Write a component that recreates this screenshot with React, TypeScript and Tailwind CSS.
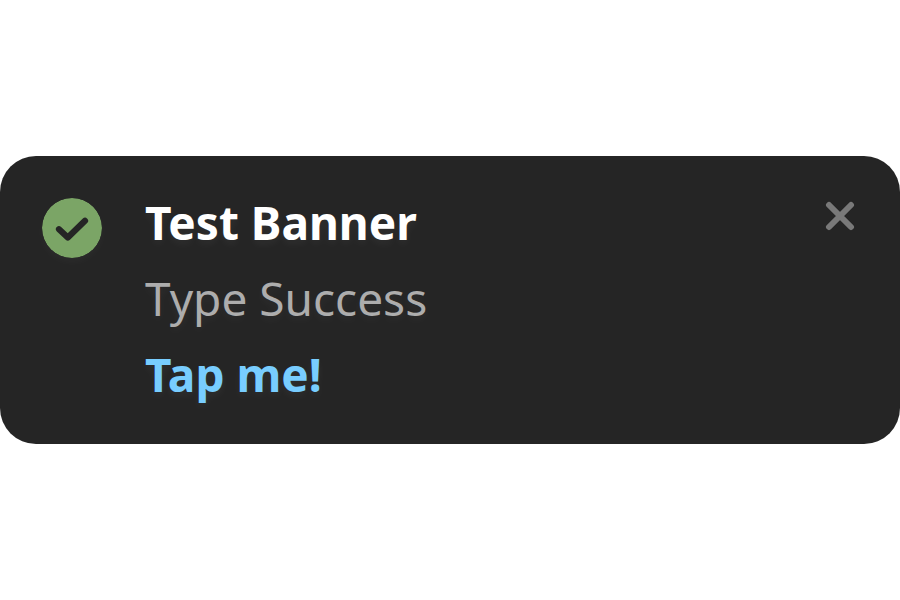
export default function App() {
  return (
    <main className="flex min-h-screen items-center bg-white font-['Noto_Sans',sans-serif]">
      <section role="status" className="flex w-full items-start rounded-[36px] bg-[#252525] px-[42px] pt-[28px] pb-[32px]">
        <svg viewBox="0 0 60 60" className="mt-[14px] size-[60px] shrink-0 rounded-full shadow-[0_4px_8px_rgb(255_255_255/0.03)]" aria-hidden="true">
          <circle cx="30" cy="30" r="30" fill="#7ba566" />
          <path d="M17 31.2 L25.8 39.5 L43 22.8" fill="none" stroke="#252525" strokeWidth="6.2" strokeLinecap="round" strokeLinejoin="round" />
        </svg>
        <div className="ml-[43px] min-w-0 flex-1 text-[46px] leading-[76px] [text-shadow:0_4px_8px_rgb(255_255_255/0.05)]">
          <h1 className="font-bold text-white">Test Banner</h1>
          <p className="text-[#adadad]">Type Success</p>
          <a href="#details" className="block w-fit font-bold text-[#78cdff]">Tap me!</a>
        </div>
        <button type="button" aria-label="Close" className="mt-[17px] mr-[3px] size-[30px] shrink-0">
          <svg viewBox="0 0 30 30" className="size-full" fill="none" stroke="#797979" strokeWidth="6" strokeLinecap="round">
            <path d="M4 4 L26 26 M26 4 L4 26" />
          </svg>
        </button>
      </section>
    </main>
  );
}
